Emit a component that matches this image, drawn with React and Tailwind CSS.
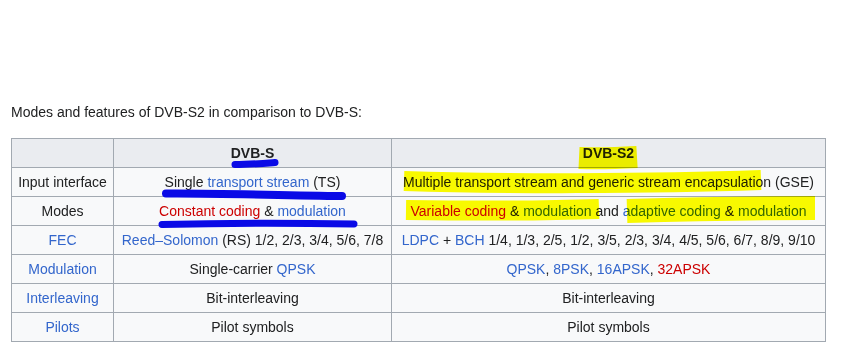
import React from "react";

const L = ({ children }) => <span className="text-[#3366cc]">{children}</span>;
const R = ({ children }) => <span className="text-[#cc0000]">{children}</span>;

const rows = [
  {
    label: "Input interface",
    plain: true,
    s: (
      <>
        Single <L>transport stream</L> (TS)
      </>
    ),
    s2: <>Multiple transport stream and generic stream encapsulation (GSE)</>,
  },
  {
    label: "Modes",
    plain: true,
    s: (
      <>
        <R>Constant coding</R> &amp; <L>modulation</L>
      </>
    ),
    s2: (
      <>
        <R>Variable coding</R> &amp; <L>modulation</L> and <L>adaptive coding</L> &amp;{" "}
        <L>modulation</L>
      </>
    ),
  },
  {
    label: "FEC",
    s: (
      <>
        <L>Reed–Solomon</L> (RS) 1/2, 2/3, 3/4, 5/6, 7/8
      </>
    ),
    s2: (
      <>
        <L>LDPC</L> + <L>BCH</L> 1/4, 1/3, 2/5, 1/2, 3/5, 2/3, 3/4, 4/5, 5/6, 6/7, 8/9, 9/10
      </>
    ),
  },
  {
    label: "Modulation",
    s: (
      <>
        Single-carrier <L>QPSK</L>
      </>
    ),
    s2: (
      <>
        <L>QPSK</L>, <L>8PSK</L>, <L>16APSK</L>, <R>32APSK</R>
      </>
    ),
  },
  { label: "Interleaving", s: <>Bit-interleaving</>, s2: <>Bit-interleaving</> },
  { label: "Pilots", s: <>Pilot symbols</>, s2: <>Pilot symbols</> },
];

const cell = "border border-[#a2a9b1] h-[29px] py-0 px-[5px] leading-[22px] text-center whitespace-nowrap";

export default function App() {
  return (
    <div className="relative w-[850px] h-[353px] bg-white overflow-hidden font-['Liberation_Sans',Arial,sans-serif] text-[14px] text-[#202122]">
      <div className="px-[11px] pt-[101px]">
        <p className="leading-[22px]">Modes and features of DVB-S2 in comparison to DVB-S:</p>
        <table className="mt-[15px] w-[814px] table-fixed border-collapse bg-[#f8f9fa]">
          <colgroup>
            <col className="w-[102px]" />
            <col className="w-[278px]" />
            <col className="w-[434px]" />
          </colgroup>
          <thead>
            <tr className="bg-[#eaecf0]">
              <th className={cell}></th>
              <th className={cell + " font-bold"}>DVB-S</th>
              <th className={cell + " font-bold"}>DVB-S2</th>
            </tr>
          </thead>
          <tbody>
            {rows.map((r) => (
              <tr key={r.label}>
                <td className={cell}>{r.plain ? r.label : <L>{r.label}</L>}</td>
                <td className={cell}>{r.s}</td>
                <td className={cell}>{r.s2}</td>
              </tr>
            ))}
          </tbody>
        </table>
      </div>

      {/* hand-drawn marks over the table */}
      <svg className="absolute inset-0 pointer-events-none" width="850" height="353">
        <g className="mix-blend-multiply" stroke="#ffff00" fill="none">
          <path d="M579 158 C600 159, 620 158, 637 157" strokeWidth="22" />
          <path d="M404 181 C500 184, 650 184, 761 180" strokeWidth="20" />
          <path d="M406 210 C480 211, 540 211, 599 209" strokeWidth="20" />
          <path d="M627 211 C700 209, 760 208, 815 208" strokeWidth="24" />
        </g>
        <g stroke="#0a0ae6" fill="none" strokeLinecap="round">
          <path d="M235 164.5 C250 164.5, 262 163.5, 275 162.5" strokeWidth="7" />
          <path d="M166 193.5 C220 193, 280 195.5, 342 196" strokeWidth="8" />
          <path d="M162 224.5 C220 223, 300 223, 354 224" strokeWidth="7" />
        </g>
      </svg>
    </div>
  );
}
